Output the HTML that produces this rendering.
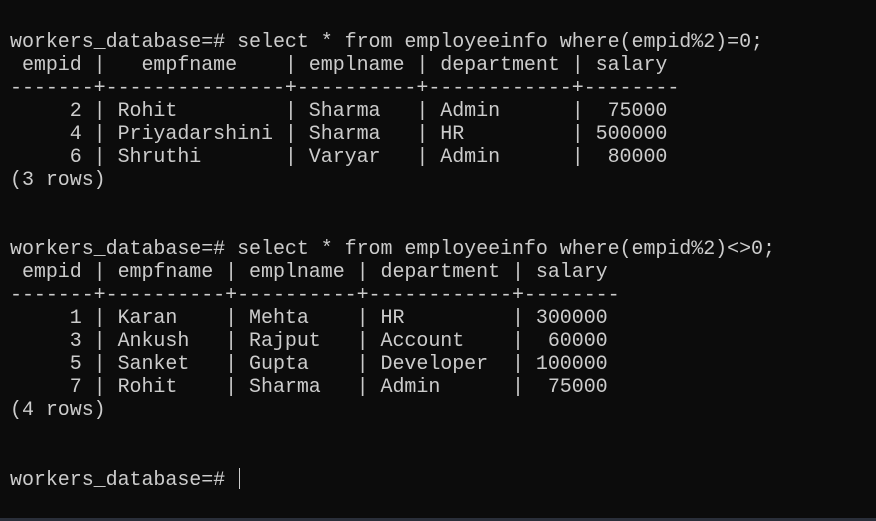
<!DOCTYPE html><html><head><style>
html,body{margin:0;padding:0;background:#0c0c0c;width:876px;height:521px;overflow:hidden}
pre{position:absolute;left:10px;top:31px;margin:0;font-family:"Liberation Mono",monospace;font-size:20px;line-height:23px;color:#cccccc;letter-spacing:-0.05px}
.cur{display:inline-block;width:1px;height:21px;background:#ccc;vertical-align:-4px;margin-left:2px}
.bar{position:absolute;left:0;bottom:0;width:876px;height:3px;background:#2a2f3a}
</style></head><body><pre>workers_database=# select * from employeeinfo where(empid%2)=0;
 empid |   empfname    | emplname | department | salary
-------+---------------+----------+------------+--------
     2 | Rohit         | Sharma   | Admin      |  75000
     4 | Priyadarshini | Sharma   | HR         | 500000
     6 | Shruthi       | Varyar   | Admin      |  80000
(3 rows)


workers_database=# select * from employeeinfo where(empid%2)&lt;&gt;0;
 empid | empfname | emplname | department | salary
-------+----------+----------+------------+--------
     1 | Karan    | Mehta    | HR         | 300000
     3 | Ankush   | Rajput   | Account    |  60000
     5 | Sanket   | Gupta    | Developer  | 100000
     7 | Rohit    | Sharma   | Admin      |  75000
(4 rows)


workers_database=# <span class="cur"></span></pre><div class="bar"></div></body></html>
